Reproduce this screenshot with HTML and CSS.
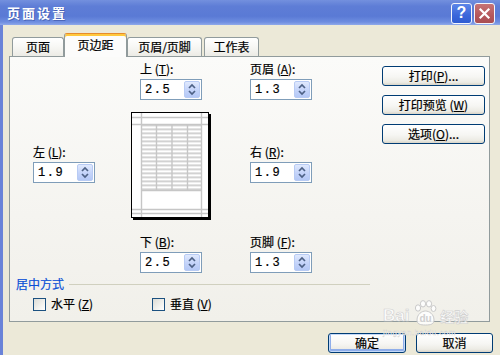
FILE: index.html
```html
<!DOCTYPE html>
<html lang="zh-CN">
<head>
<meta charset="utf-8">
<title>页面设置</title>
<link rel="stylesheet" href="styles.css">
</head>
<body>
<div class="window">
  <div class="titlebar">
    <span class="title">页面设置</span>
    <div class="tb-buttons">
      <span class="tb-btn help">?</span>
      <span class="tb-btn close"><svg width="13" height="13" viewBox="0 0 13 13"><path d="M2.5 2.5 L10.5 10.5 M10.5 2.5 L2.5 10.5" stroke="#fff" stroke-width="2.2" stroke-linecap="square"/></svg></span>
    </div>
  </div>
  <div class="client">
    <div class="tabs">
      <div class="tab t1">页面</div>
      <div class="tab active t2">页边距</div>
      <div class="tab t3">页眉/页脚</div>
      <div class="tab t4">工作表</div>
    </div>
    <div class="panel">
      <div class="layout">
        <div class="group g-top">
          <div class="lbl">上 (<u>T</u>):</div>
          <div class="spin"><span class="val">2.5</span><span class="arrows"><svg width="14" height="15" viewBox="0 0 14 15"><path d="M4 6 L7 3 L10 6 M4 9 L7 12 L10 9" fill="none" stroke="#4D6185" stroke-width="1.7"/></svg></span></div>
        </div>
        <div class="group g-header">
          <div class="lbl">页眉 (<u>A</u>):</div>
          <div class="spin"><span class="val">1.3</span><span class="arrows"><svg width="14" height="15" viewBox="0 0 14 15"><path d="M4 6 L7 3 L10 6 M4 9 L7 12 L10 9" fill="none" stroke="#4D6185" stroke-width="1.7"/></svg></span></div>
        </div>
        <div class="side-buttons">
          <div class="btn">打印(<u>P</u>)...</div>
          <div class="btn">打印预览 (<u>W</u>)</div>
          <div class="btn">选项(<u>O</u>)...</div>
        </div>
        <div class="group g-left">
          <div class="lbl">左 (<u>L</u>):</div>
          <div class="spin"><span class="val">1.9</span><span class="arrows"><svg width="14" height="15" viewBox="0 0 14 15"><path d="M4 6 L7 3 L10 6 M4 9 L7 12 L10 9" fill="none" stroke="#4D6185" stroke-width="1.7"/></svg></span></div>
        </div>
        <div class="preview">
          <svg width="80" height="108" viewBox="0 0 80 108">
            <defs>
              <pattern id="rows" x="0" y="12.5" width="60" height="4" patternUnits="userSpaceOnUse">
                <rect x="0" y="0" width="60" height="1.6" fill="#C6C6C6"/>
              </pattern>
            </defs>
            <rect x="0.5" y="0.5" width="77" height="105" fill="#fff" stroke="#000"/>
            <rect x="78" y="2" width="2" height="106" fill="#000"/>
            <rect x="2" y="106" width="78" height="2" fill="#000"/>
            <rect x="10.5" y="12.5" width="60" height="66" fill="url(#rows)"/>
            <g stroke="#C6C6C6" stroke-width="1.4" fill="none">
              <path d="M10.5 1 V105 M70.5 1 V105"/>
              <path d="M1 5.5 H77 M1 12.5 H77 M1 97.5 H77 M1 101.5 H77"/>
              <path d="M25.5 12.5 V78.5 M41 12.5 V78.5 M56.5 12.5 V78.5 M10.5 78.5 H70.5"/>
            </g>
          </svg>
        </div>
        <div class="group g-right">
          <div class="lbl">右 (<u>R</u>):</div>
          <div class="spin"><span class="val">1.9</span><span class="arrows"><svg width="14" height="15" viewBox="0 0 14 15"><path d="M4 6 L7 3 L10 6 M4 9 L7 12 L10 9" fill="none" stroke="#4D6185" stroke-width="1.7"/></svg></span></div>
        </div>
        <div class="group g-bottom">
          <div class="lbl">下 (<u>B</u>):</div>
          <div class="spin"><span class="val">2.5</span><span class="arrows"><svg width="14" height="15" viewBox="0 0 14 15"><path d="M4 6 L7 3 L10 6 M4 9 L7 12 L10 9" fill="none" stroke="#4D6185" stroke-width="1.7"/></svg></span></div>
        </div>
        <div class="group g-footer">
          <div class="lbl">页脚 (<u>F</u>):</div>
          <div class="spin"><span class="val">1.3</span><span class="arrows"><svg width="14" height="15" viewBox="0 0 14 15"><path d="M4 6 L7 3 L10 6 M4 9 L7 12 L10 9" fill="none" stroke="#4D6185" stroke-width="1.7"/></svg></span></div>
        </div>
      </div>
      <div class="center">
        <div class="legend"><span class="legend-text">居中方式</span><span class="rule"></span></div>
        <div class="checks">
          <label class="check"><span class="box"></span><span>水平 (<u>Z</u>)</span></label>
          <label class="check"><span class="box"></span><span>垂直 (<u>V</u>)</span></label>
        </div>
      </div>
    </div>
    <div class="footer">
      <div class="btn btn-default">确定</div>
      <div class="btn btn-cancel">取消</div>
    </div>
  </div>
  <div class="watermark">
    <span class="wm-bai">Bai</span>
    <span class="wm-paw">
      <svg width="24" height="26" viewBox="0 0 24 26">
        <g fill="rgba(255,255,255,0.85)" stroke="#C9C9C9" stroke-width="1">
          <ellipse cx="5" cy="8" rx="2.6" ry="3.2"/>
          <ellipse cx="10" cy="3.8" rx="2.6" ry="3.2"/>
          <ellipse cx="16" cy="3.8" rx="2.6" ry="3.2"/>
          <ellipse cx="20.5" cy="8.5" rx="2.4" ry="3"/>
          <path d="M4 20 C4 14 9 11 12.5 11 C16 11 21 14 21 20 C21 24 18 25 12.5 25 C7 25 4 24 4 20 Z"/>
        </g>
        <text x="12.5" y="22" text-anchor="middle" font-family="Liberation Sans, sans-serif" font-weight="bold" font-size="10" fill="#D0D0D0">du</text>
      </svg>
    </span>
    <span class="wm-jy">经验</span>
    <div class="wm-url">jingyan.baidu.com</div>
  </div>
</div>
</body>
</html>
```

FILE: styles.css
```css
html, body {
  margin: 0;
  padding: 0;
}

body {
  width: 500px;
  height: 355px;
  overflow: hidden;
  background: #ECE9D8;
  font-family: "Noto Sans CJK SC", "Liberation Sans", sans-serif;
  font-size: 12px;
  color: #000;
}

u {
  text-decoration: underline;
  text-underline-offset: 1px;
}

.window {
  position: relative;
  width: 500px;
  height: 355px;
  display: flex;
  flex-direction: column;
}

/* ---------- title bar ---------- */
.titlebar {
  height: 25px;
  flex: none;
  box-sizing: border-box;
  display: flex;
  align-items: center;
  justify-content: space-between;
  padding: 0 5px 0 7px;
  background: linear-gradient(180deg, #7390DE 0%, #5E7DD6 25%, #5A7AD5 65%, #6E8DE0 88%, #8FA9EA 100%);
}

.title {
  color: #fff;
  font-weight: bold;
  font-size: 13px;
  letter-spacing: 2px;
  line-height: 16px;
  text-shadow: 1px 1px 0 rgba(40, 60, 140, 0.45);
}

.tb-buttons {
  display: flex;
  gap: 2px;
  margin-top: 1px;
}

.tb-btn {
  width: 21px;
  height: 21px;
  box-sizing: border-box;
  border: 1px solid #F4F6FC;
  border-radius: 3px;
  display: flex;
  align-items: center;
  justify-content: center;
  color: #fff;
}

.help {
  background: linear-gradient(180deg, #5D86E8 0%, #3A66DA 60%, #2F5CD2 100%);
  font-family: "Liberation Sans", sans-serif;
  font-weight: bold;
  font-size: 16px;
  line-height: 1;
}

.close {
  background: linear-gradient(180deg, #C77476 0%, #B5575B 60%, #A94E53 100%);
}

/* ---------- client ---------- */
.client {
  flex: 1;
  border-left: 3px solid #6A83D8;
  padding-left: 6px;
  -webkit-text-stroke: 0.2px #000;
}

.tabs {
  height: 31px;
  box-sizing: border-box;
  display: flex;
  align-items: flex-end;
  padding-left: 3px;
}

.tab {
  height: 19px;
  box-sizing: border-box;
  border: 1px solid #919B9C;
  border-bottom: none;
  border-radius: 3px 3px 0 0;
  background: linear-gradient(180deg, #FFFFFF 0%, #F7F7F4 50%, #ECEBE5 100%);
  display: flex;
  align-items: center;
  justify-content: center;
  line-height: 14px;
}

.t1 { width: 52px; }
.t3 { width: 75px; }
.t4 { width: 55px; margin-left: 2px; }

.tab.active {
  position: relative;
  z-index: 1;
  width: 63px;
  height: 24px;
  margin-bottom: -1px;
  border-top: 1px solid #E68B2C;
  box-shadow: inset 0 2px 0 #FFC83C;
  background: #FCFCFB;
  padding-bottom: 2px;
}

.panel {
  width: 481px;
  height: 266px;
  box-sizing: border-box;
  border: 1px solid #919B9C;
  background: linear-gradient(180deg, #FBFBF9 0%, #F5F4F0 60%, #F1F0EA 100%);
  padding-top: 4px;
}

.layout {
  display: grid;
  grid-template-columns: 121px 82px 169px 107px;
  grid-template-rows: 39px 120px auto;
}

.group {
  display: flex;
  flex-direction: column;
  gap: 2px;
}

.lbl {
  line-height: 16px;
  height: 16px;
  white-space: nowrap;
}

.g-top    { grid-column: 2; grid-row: 1; margin-left: 9px; }
.g-header { grid-column: 3; grid-row: 1; margin-left: 37px; }
.g-left   { grid-column: 1; grid-row: 2; margin-left: 23px; margin-top: 44px; }
.g-right  { grid-column: 3; grid-row: 2; margin-left: 37px; margin-top: 44px; }
.g-bottom { grid-column: 2; grid-row: 3; margin-left: 9px; margin-top: 14px; }
.g-footer { grid-column: 3; grid-row: 3; margin-left: 37px; margin-top: 14px; }

.preview {
  grid-column: 2;
  grid-row: 2;
  margin-top: 12px;
  line-height: 0;
}

.side-buttons {
  grid-column: 4;
  grid-row: 1 / 3;
  margin-top: 5px;
  display: flex;
  flex-direction: column;
  gap: 9px;
  align-self: start;
}

.side-buttons .btn {
  width: 103px;
}

/* spinner */
.spin {
  width: 62px;
  height: 21px;
  box-sizing: border-box;
  border: 1px solid #7F9DB9;
  background: #fff;
  display: flex;
  align-items: center;
  justify-content: space-between;
  padding: 1px 1px 1px 4px;
}

.val {
  letter-spacing: 1.5px;
  line-height: 14px;
  font-family: "Liberation Mono", "Noto Sans CJK SC", monospace;
  font-size: 12px;
}

.arrows {
  width: 16px;
  height: 17px;
  box-sizing: border-box;
  border: 1px solid #B8CBF4;
  border-radius: 2px;
  background: linear-gradient(180deg, #E0E9FD 0%, #C6D5FA 50%, #B4C8F6 100%);
  display: flex;
  align-items: center;
  justify-content: center;
}

/* buttons */
.btn {
  height: 20px;
  box-sizing: border-box;
  border: 1px solid #003C74;
  border-radius: 3px;
  background: linear-gradient(180deg, #FFFFFF 0%, #F6F6F3 55%, #ECEBE4 85%, #D8D4C8 100%);
  display: flex;
  align-items: center;
  justify-content: center;
  line-height: 14px;
  white-space: nowrap;
}

/* center section */
.center {
  margin: 3px 0 0 6px;
  width: 354px;
}

.legend {
  display: flex;
  align-items: center;
  gap: 5px;
  height: 16px;
  line-height: 16px;
}

.legend-text {
  color: #0A4FD6;
  -webkit-text-stroke: 0.2px #0A4FD6;
}

.rule {
  flex: 1;
  height: 1px;
  background: #D0D0BF;
  margin-top: 1px;
}

.checks {
  display: flex;
  margin: 5px 0 0 17px;
}

.check {
  width: 119px;
  display: flex;
  align-items: center;
  gap: 5px;
  line-height: 14px;
}

.box {
  width: 13px;
  height: 13px;
  box-sizing: border-box;
  border: 1px solid #1C5180;
  background: linear-gradient(135deg, #DCDCD6 0%, #F2F2EE 60%, #FFFFFF 100%);
}

/* footer */
.footer {
  display: flex;
  justify-content: flex-end;
  gap: 10px;
  padding: 11px 7px 0 0;
}

.btn-default {
  width: 78px;
  box-shadow: inset 0 0 0 1px #C4D9F8, inset 0 -1px 0 2px #8FAEEA;
}

.btn-cancel {
  width: 77px;
}

/* watermark overlay */
.watermark {
  position: absolute;
  left: 383px;
  top: 300px;
  width: 100px;
  pointer-events: none;
  color: rgba(255, 255, 255, 0.85);
  -webkit-text-stroke: 0.6px #CFCFCF;
  font-family: "Liberation Sans", "Noto Sans CJK SC", sans-serif;
  font-weight: bold;
}

.wm-bai {
  font-size: 17px;
  vertical-align: bottom;
}

.wm-paw {
  display: inline-block;
  vertical-align: bottom;
  line-height: 0;
}

.wm-jy {
  font-size: 14px;
  vertical-align: bottom;
}

.wm-url {
  font-size: 8px;
  font-weight: normal;
  -webkit-text-stroke: 0.3px #CFCFCF;
  letter-spacing: 0.5px;
  margin-top: 2px;
}
```
